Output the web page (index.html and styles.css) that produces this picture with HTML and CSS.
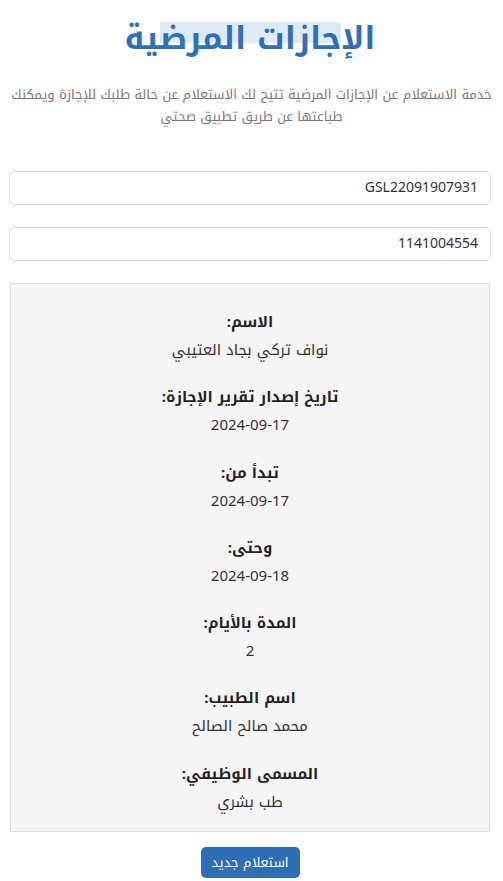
FILE: index.html
```html
<!DOCTYPE html>
<html lang="ar" dir="rtl">
<head>
<meta charset="utf-8">
<link rel="stylesheet" href="styles.css">
</head>
<body>
<div class="page">
  <h1 class="title">الإ<span class="sel">جازات المرض</span>ية</h1>
  <p class="intro">خدمة الاستعلام عن الإجازات المرضية تتيح لك الاستعلام عن حالة طلبك للإجازة ويمكنك طباعتها عن طريق تطبيق صحتي</p>
  <div class="field">GSL22091907931</div>
  <div class="field">1141004554</div>
  <div class="result">
    <div class="item"><div class="label">الاسم:</div><div class="value">نواف تركي بجاد العتيبي</div></div>
    <div class="item"><div class="label">تاريخ إصدار تقرير الإجازة:</div><div class="value">2024-09-17</div></div>
    <div class="item"><div class="label">تبدأ من:</div><div class="value">2024-09-17</div></div>
    <div class="item"><div class="label">وحتى:</div><div class="value">2024-09-18</div></div>
    <div class="item"><div class="label">المدة بالأيام:</div><div class="value">2</div></div>
    <div class="item"><div class="label">اسم الطبيب:</div><div class="value">محمد صالح الصالح</div></div>
    <div class="item"><div class="label">المسمى الوظيفي:</div><div class="value">طب بشري</div></div>
  </div>
  <div class="actions"><button class="btn">استعلام جديد</button></div>
</div>
</body>
</html>
```
FILE: styles.css
```css
html, body { margin: 0; padding: 0; background: #fff; }
body { font-family: "Noto Kufi Arabic", "Noto Sans Arabic", "Noto Sans", "DejaVu Sans", sans-serif; color: #333; }
.page { padding: 0 12px 0 9px; }
.title { margin: 0; padding-top: 14px; text-align: center; font-size: 32px; font-weight: 700; color: #3070b5; line-height: 50px; }
.sel { background: linear-gradient(#dfeaf5, #dfeaf5) no-repeat; background-size: 100% 21px; background-position: 0 35%; }
.intro { margin: 20px -12px 0 -9px; text-align: center; font-size: 13px; line-height: 22px; color: #777; }
.field { margin-top: 43px; height: 32px; border: 1px solid #dcdfe3; border-radius: 5px; font-size: 14px; line-height: 32px; padding: 0 12px; text-align: right; direction: ltr; color: #333; }
.field + .field { margin-top: 22px; }
.result { margin: 22px 1px 0; background: #f5f5f5; border: 1px solid #ddd; padding: 24px 0 15px; text-align: center; display: flex; flex-direction: column; gap: 19.3px; }
.item { height: 56px; }
.label { font-weight: 700; font-size: 15px; line-height: 28px; color: #222; }
.value { font-size: 15px; line-height: 28px; color: #333; }
.actions { display: flex; justify-content: center; padding-top: 15px; }
.btn { background: #2f6db5; color: #fff; border: 0; border-radius: 5px; width: 99px; height: 31px; font-family: inherit; font-size: 13px; }
```
